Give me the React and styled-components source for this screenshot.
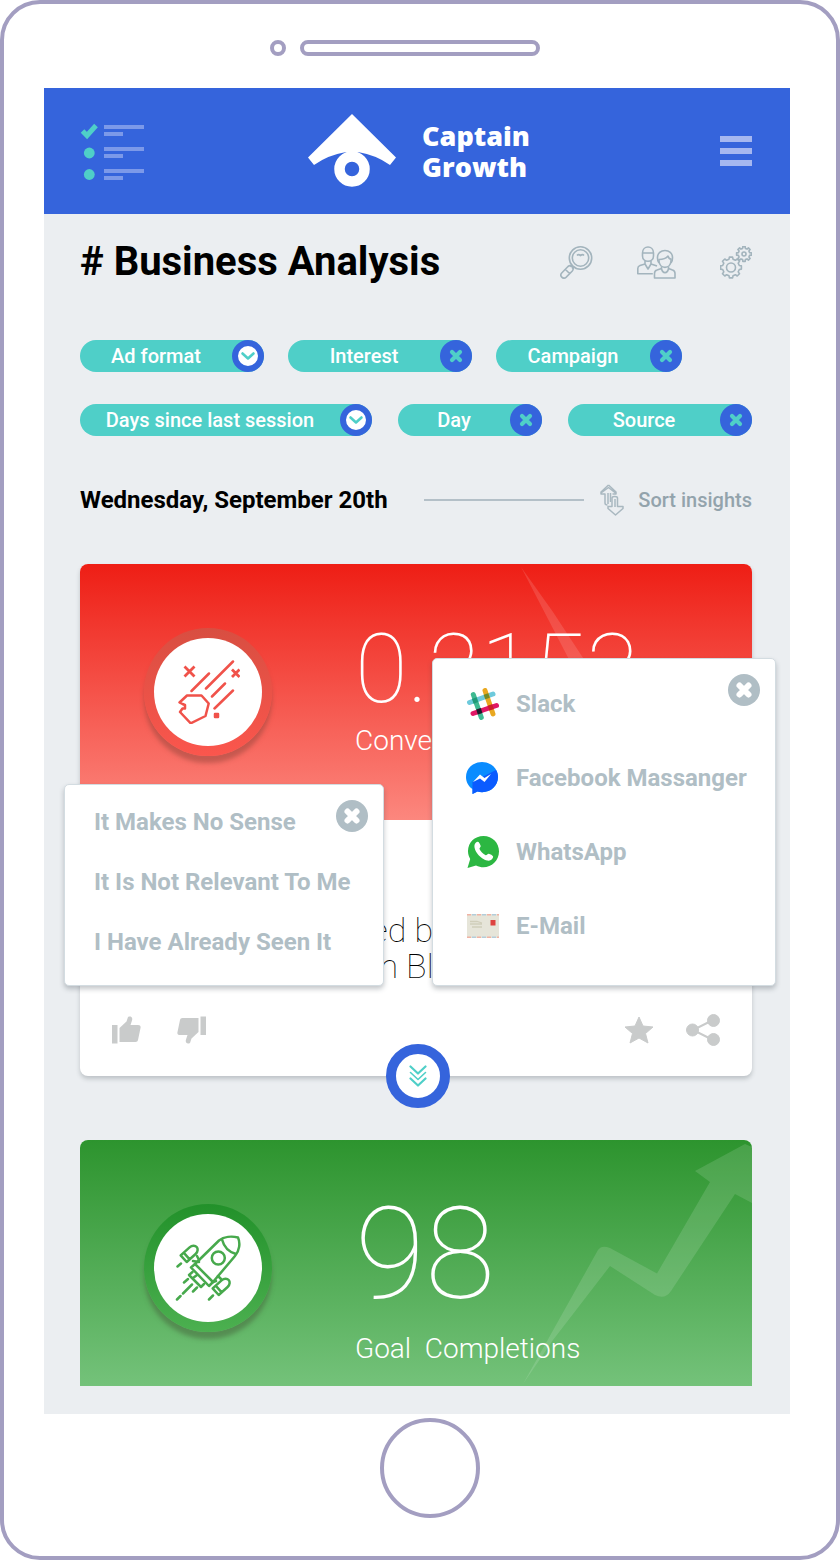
import React from "react";
import styled, { createGlobalStyle } from "styled-components";

const color = {
  frame: "#a39ec1",
  blue: "#3564dc",
  teal: "#4fcfc8",
  page: "#ebeef1",
  muted: "#b0bec5",
  line: "#a3b4bd",
  action: "#c9cbcb",
};

const GlobalStyle = createGlobalStyle`
  *, *::before, *::after { box-sizing: border-box; }
  body { margin: 0; background: #fff; font-family: Roboto, "Liberation Sans", sans-serif; }
  h1, h2, p, ul { margin: 0; padding: 0; }
  button { font: inherit; color: inherit; border: 0; padding: 0; background: none; cursor: pointer; }
  svg { display: block; }
`;

const Phone = styled.div`
  display: flex;
  flex-direction: column;
  align-items: center;
  border: 4px solid ${color.frame};
  border-radius: 40px;
  padding: 36px 46px 38px 40px;
  background: #fff;
`;

const Speaker = styled.div`
  display: flex;
  gap: 14px;
  margin: 0 24px 32px 0;
`;

const SpeakerPart = styled.span`
  width: ${(p) => p.$width}px;
  height: 16px;
  border: 4px solid ${color.frame};
  border-radius: 8px;
`;

const HomeButton = styled.button`
  width: 100px;
  height: 100px;
  margin: 4px 0 0 26px;
  border: 4px solid ${color.frame};
  border-radius: 50%;
`;

const Screen = styled.div`
  width: 100%;
  background: ${color.page};
`;

const Header = styled.header`
  display: grid;
  grid-template-columns: 64px 1fr 64px;
  align-items: center;
  height: 126px;
  padding: 0 38px 0 36px;
  background: ${color.blue};
`;

const MenuButton = styled.button`
  justify-self: end;
`;

const Brand = styled.a`
  display: flex;
  align-items: center;
  justify-content: center;
  gap: 26px;
  padding-left: 6px;
  color: #fff;
  text-decoration: none;
  font: 800 27px/31px "Open Sans", "Noto Sans", sans-serif;
`;

const Content = styled.main`
  padding: 24px 38px 28px 36px;
`;

const TitleRow = styled.div`
  display: flex;
  align-items: center;
  justify-content: space-between;
  height: 48px;
`;

const Title = styled.h1`
  font-size: 40px;
  line-height: 44px;
  font-weight: 700;
  color: #000;
`;

const Tools = styled.div`
  display: flex;
  gap: 44px;
  color: ${color.line};
`;

const Filters = styled.div`
  display: flex;
  flex-direction: column;
  gap: 32px;
  margin: 54px 0 48px;
`;

const FilterRow = styled.div`
  display: flex;
  gap: ${(p) => p.$gap}px;
`;

const Chip = styled.div`
  display: flex;
  width: ${(p) => p.$width}px;
  height: 32px;
  border-radius: 16px;
  background: ${color.teal};
`;

const ChipLabel = styled.span`
  flex: 1;
  text-align: center;
  white-space: nowrap;
  color: #fff;
  font-size: 20px;
  line-height: 32px;
  font-weight: 500;
`;

const ChipButton = styled.button`
  display: grid;
  place-items: center;
  width: 32px;
  height: 32px;
  border-radius: 50%;
  background: ${(p) => (p.$open ? "#fff" : color.blue)};
  border: ${(p) => (p.$open ? 6 : 0)}px solid ${color.blue};
`;

const DateRow = styled.div`
  display: flex;
  align-items: center;
  height: 32px;
  margin-bottom: 48px;
`;

const DateTitle = styled.h2`
  font-size: 24px;
  line-height: 32px;
  font-weight: 700;
  color: #000;
`;

const Rule = styled.span`
  flex: 1;
  height: 2px;
  margin: 0 16px 0 36px;
  background: #b4c0c8;
`;

const SortButton = styled.button`
  display: flex;
  align-items: center;
  gap: 14px;
  color: #93a3ac;
  font-size: 20px;
  line-height: 32px;
  font-weight: 500;
`;

const Card = styled.article`
  position: relative;
  background: #fff;
  border-radius: ${(p) => (p.$cut ? "8px 8px 0 0" : "8px")};
  box-shadow: ${(p) => (p.$cut ? "none" : "0 3px 4px rgba(60, 70, 80, 0.25)")};
  margin-top: ${(p) => (p.$cut ? 64 : 0)}px;
`;

const Banner = styled.div`
  position: relative;
  display: flex;
  height: ${(p) => p.$height}px;
  padding: 64px;
  gap: 83px;
  border-radius: 8px 8px 0 0;
  background: linear-gradient(${(p) => p.$from}, ${(p) => p.$to});
  color: #fff;
`;

const Trend = styled.svg`
  position: absolute;
  top: 0;
  right: 0;
`;

const Badge = styled.div`
  display: grid;
  place-items: center;
  flex: none;
  width: 128px;
  height: 128px;
  border-radius: 50%;
  background: linear-gradient(${(p) => p.$from}, ${(p) => p.$to});
  box-shadow: 0 7px 4px ${(p) => p.$shade};
`;

const BadgeFace = styled.div`
  display: grid;
  place-items: center;
  width: 108px;
  height: 108px;
  border-radius: 50%;
  background: #fff;
`;

const Metric = styled.div`
  position: relative;
  white-space: pre;
`;

const MetricValue = styled.p`
  font-size: ${(p) => p.$size}px;
  line-height: ${(p) => p.$line}px;
  font-weight: 100;
`;

const MetricLabel = styled.p`
  font-size: 28px;
  line-height: 32px;
  font-weight: 300;
  margin-top: ${(p) => p.$gap}px;
`;

const Insight = styled.p`
  padding: 92px 30px 0;
  font-size: 34px;
  line-height: 36px;
  font-weight: 100;
  color: #000;
  white-space: pre;
`;

const Actions = styled.div`
  display: flex;
  justify-content: space-between;
  align-items: center;
  height: 92px;
  padding: 0 32px;
  color: ${color.action};
`;

const ActionGroup = styled.div`
  display: flex;
  align-items: center;
  gap: ${(p) => p.$gap}px;
`;

const ExpandButton = styled.button`
  position: absolute;
  left: 50%;
  bottom: -32px;
  display: grid;
  place-items: center;
  width: 64px;
  height: 64px;
  margin-left: -30px;
  border: 10px solid ${color.blue};
  border-radius: 50%;
  background: #fff;
`;

const Popup = styled.div`
  position: absolute;
  border: 1px solid #d3dce1;
  border-radius: 5px;
  background: #fff;
  box-shadow: 0 3px 5px rgba(60, 70, 80, 0.3);
`;

const ReasonPopup = styled(Popup)`
  left: -16px;
  top: 220px;
  width: 320px;
  height: 202px;
  padding: 7px 29px;
`;

const SharePopup = styled(Popup)`
  right: -24px;
  top: 94px;
  width: 344px;
  height: 328px;
  padding: 8px 33px;
`;

const PopupList = styled.ul`
  list-style: none;
`;

const PopupItem = styled.button`
  display: flex;
  align-items: center;
  gap: 16px;
  height: ${(p) => p.$height}px;
  color: ${color.muted};
  font-size: 24px;
  font-weight: 700;
  white-space: nowrap;
`;

const CloseButton = styled.button`
  position: absolute;
  top: 15px;
  right: 15px;
`;

const Close = () => (
  <svg width="32" height="32" viewBox="0 0 32 32">
    <circle cx="16" cy="16" r="16" fill={color.muted} />
    <path d="M11.5 11.5l9 9M20.5 11.5l-9 9" stroke="#fff" strokeWidth="6" strokeLinecap="round" />
  </svg>
);

const ListIcon = () => (
  <svg width="64" height="58" viewBox="0 0 64 58">
    <path d="M2.5 9L7 13.5L16 3.5" fill="none" stroke={color.teal} strokeWidth="5" />
    <circle cx="9.3" cy="31" r="5.4" fill={color.teal} />
    <circle cx="9.3" cy="52.5" r="5.4" fill={color.teal} />
    <path d="M24 5h40M24 27h40M24 49h40" stroke="#7c99e9" strokeWidth="4" />
    <path d="M24 12h19M24 34h19M24 56h19" stroke="#7c99e9" strokeWidth="4" />
  </svg>
);

const Logo = () => (
  <svg width="88" height="74" viewBox="0 0 88 74">
    <path d="M44 0L88 43.5L82 51Q68 41 50 38L44 40L38 38Q20 41 6 51L0 43.5Z" fill="#fff" />
    <circle cx="44" cy="55" r="12.5" fill={color.blue} stroke="#fff" strokeWidth="10.5" />
  </svg>
);

const Burger = () => (
  <svg width="32" height="30" viewBox="0 0 32 30">
    <path d="M0 3h32M0 15h32M0 27h32" stroke="#a5b7f0" strokeWidth="6" />
  </svg>
);

const SearchIcon = () => (
  <svg width="33" height="33" viewBox="0 0 33 33" fill="none" stroke="currentColor" strokeWidth="1.6">
    <circle cx="20.5" cy="12" r="11.2" />
    <circle cx="20.5" cy="12" r="8.2" />
    <path d="M17 9.5c1-1.2 2.2-1 3.5 0c1.3-1 2.5-1.2 3.5 0" />
    <path d="M12.5 19l-2 2M14 20.5l-2 2" />
    <path d="M8 20.500L1.700 27c-2.500 2.800 1.300 6.800 4.300 4.300l6.300-6.300c2.500-3-1.300-6.800-4.300-4.500zM5.500 23.500l4.300 4.300" />
  </svg>
);

const PeopleIcon = () => (
  <svg width="39" height="33" viewBox="0 0 39 33" fill="none" stroke="currentColor" strokeWidth="1.6" strokeLinejoin="round">
    <path d="M5.5 7c0-8 11-8 11 0v3c0 7-11 7-11 0zM5.5 7h11" />
    <path d="M8 15v3l-5 1.5c-1.500.5-2.200 1.500-2.200 3v5.300h15M14 15v3l6 2M8 18l3 5l3-5M11 23v-2" />
    <path d="M20.500 12c-.5-10 15.500-10 15 0c0 3-1 4-1.500 5M20.500 12c0 3 1 4 1.500 5" />
    <path d="M22 13.500c4 0 7-1 9-3.500c.5 2 1.500 3 3 3v2c-.5 8.500-11.500 8.500-12 0z" />
    <path d="M24.500 20.500v2l-4.500 1.500c-2 .5-2.500 2-2.500 3.500v4.500h20.500v-4.500c0-1.500-.5-3-2.500-3.500l-4-1.500v-2M24.500 22.500c1 5.500 6 5.500 7 0" />
  </svg>
);

const gearPath = (cx, cy, outer, inner, teeth) => {
  const points = [];
  const step = (Math.PI * 2) / teeth;
  for (let i = 0; i < teeth; i += 1) {
    [[-0.3, inner], [-0.2, outer], [0.2, outer], [0.3, inner]].forEach(([offset, r]) => {
      const angle = (i + offset) * step;
      points.push(`${(cx + Math.cos(angle) * r).toFixed(1)} ${(cy + Math.sin(angle) * r).toFixed(1)}`);
    });
  }
  return `M${points.join("L")}Z`;
};

const GearsIcon = () => (
  <svg width="32" height="33" viewBox="0 0 32 33" fill="none" stroke="currentColor" strokeWidth="1.6" strokeLinejoin="round">
    <path d={gearPath(11, 21.5, 10.5, 8.5, 8)} />
    <circle cx="11" cy="21.5" r="4.5" />
    <path d={gearPath(24, 8, 7.500, 5.8, 8)} />
    <circle cx="24" cy="8" r="2" />
  </svg>
);

const SortIcon = () => (
  <svg width="24" height="32" viewBox="0 0 24 32" fill="none" stroke="#a9b8c0" strokeWidth="1.5" strokeLinejoin="round">
    <path d="M8.5 1L1 8v2h4v9c0 1 1 2 2.500 2M8.5 1L16 8v2h-3.500M1 9l7.500-5.500L15.500 9M8 9v11M10.500 9v9" />
    <path d="M15.5 31L8 24.5v-2h4V14c0-2 5.500-2 5.500 0v8.5H23v2zM15 15v8" />
  </svg>
);

const Chevron = () => (
  <svg width="20" height="20" viewBox="0 0 20 20">
    <path d="M4.5 7.5L10 12.5L15.5 7.5" fill="none" stroke={color.teal} strokeWidth="2.6" strokeLinecap="round" strokeLinejoin="round" />
  </svg>
);

const Cross = () => (
  <svg width="14" height="14" viewBox="0 0 14 14">
    <path d="M3 3l8 8M11 3l-8 8" stroke={color.teal} strokeWidth="4.2" strokeLinecap="round" />
  </svg>
);

const MeteorIcon = () => (
  <svg width="64" height="64" viewBox="0 0 64 64" fill="none" stroke="#f0524a" strokeWidth="2.5" strokeLinejoin="round" strokeLinecap="round">
    <path d="M11 35.5h14.5l7.200 8L29.5 56l-14.800 7.300L4 52l2.500-3.500H9V45L6.5 44L3.5 42.500z" />
    <path d="M15.5 31L33 13.5M30 28.5L57 1.500M36 36.5L49 23.5M38.5 48.5L57 30.5" />
    <path d="M8.5 6.5l10 10M18.5 6.5l-10 10M56 9.5l7.5 7.5M63.5 9.5l-7.500 7.500" strokeLinecap="butt" strokeWidth="2.8" />
    <path d="M39 54h3v3h-3z" fill="#f0524a" />
  </svg>
);

const Booster = ({ x, y }) => (
  <g transform={`translate(${x} ${y}) rotate(-42)`}>
    <path d="M-8.5 -4.5H3.5C7 -4.5 9 -2 9 0S7 4.5 3.5 4.5H-8.5ZM-4.5 -4.5V4.5" />
  </g>
);

const RocketIcon = () => (
  <svg width="66" height="66" viewBox="-1 -1 66 66" fill="none" stroke="#47a94c" strokeWidth="2.5" strokeLinejoin="round" strokeLinecap="round">
    <path d="M19 28L43 4.5C48 .5 56 0 62 1.500C64.5 7 63.5 15 59 20L37 46Z" />
    <path d="M46 3.5Q49 15 60 18" />
    <circle cx="42.3" cy="22" r="6.5" />
    <path d="M19 28L15 31.5L33 50L37 46" />
    <path d="M16.5 36L13 39L25 51L28 48M17 42l4-3" />
    <Booster x={14} y={17} />
    <Booster x={46} y={50} />
    <path d="M17 25l6 1M21 20l2 4M37 46l3-1M42 40l3 3" />
    <path d="M1.5 30.5L5 27.5M8 46.5L12 43M17 55.5L21 51.5M1 63.5L4.5 60M7 57.5L16 48.5M33 63.5L37 59.5" />
  </svg>
);

const DoubleChevron = () => (
  <svg width="18" height="24" viewBox="0 0 18 24" fill="none" stroke={color.teal} strokeLinecap="round" strokeLinejoin="round">
    <path d="M1.5 2.5L9 9.5L16.5 2.5M1.5 14.5L9 21.5L16.5 14.5" strokeWidth="2.2" />
    <path d="M1.5 8.5L9 15.5L16.5 8.5" strokeWidth="1.6" />
  </svg>
);

const ThumbIcon = ({ down }) => (
  <svg width="29" height="28" viewBox="0 0 29 28" fill="currentColor">
    <g transform={down ? "rotate(180 14.5 14)" : undefined}>
      <path d="M0 9h5.500v18.500H0zM7.500 12L14.500 5.500L16 1c3-1.500 5 .5 4 3.500L18.500 9H26c2 0 3 1 2.500 3L26 24c-.3 1.300-1 2-2.500 2H7.500z" />
    </g>
  </svg>
);

const StarIcon = () => (
  <svg width="30" height="28" viewBox="0 0 30 28" fill="currentColor" stroke="currentColor" strokeLinejoin="round">
    <path d="M15 1l4 9l10 1l-7.500 6.500L24 27l-9-5l-9 5l2.500-9.500L1 11l10-1z" />
  </svg>
);

const ShareIcon = () => (
  <svg width="34" height="32" viewBox="0 0 34 32" fill="currentColor" stroke="currentColor">
    <path d="M27 6L7 16l20 10" fill="none" strokeWidth="2" />
    <circle cx="27.5" cy="6.5" r="6" />
    <circle cx="6.5" cy="16" r="6" />
    <circle cx="27.5" cy="25.5" r="6" />
  </svg>
);

const SlackIcon = () => (
  <svg width="34" height="32" viewBox="-1 0 34 32" strokeWidth="5" strokeLinecap="round">
    <path d="M2.5 14.5L26 6" stroke="#6ecadc" />
    <path d="M18 2.5L26 26" stroke="#e9a820" />
    <path d="M6.3 6.5L14.3 29.5" stroke="#3eb991" />
    <path d="M6 25.5L29.5 17.5" stroke="#e01765" />
    <g strokeLinecap="butt">
      <path d="M17.5 9L22 7.5" stroke="#6f8a2a" />
      <path d="M5.8 13.3L10.3 11.7" stroke="#1f9a78" />
      <path d="M10 24L14.6 22.5" stroke="#1d1d2b" />
      <path d="M21.5 20.2L26 18.7" stroke="#cc2027" />
    </g>
  </svg>
);

const MessengerIcon = () => (
  <svg width="34" height="32" viewBox="0 0 34 32">
    <path d="M16 0C7 0 0 6.500 0 15c0 5 2.300 9.300 6.500 12V32l5-2.400c11 2.700 20.500-4.600 20.500-14.600C32 6.500 25 0 16 0z" fill="#0a8cff" />
    <path d="M30 8L6.500 20v12l5-2.400C22.500 32.300 32 25 32 15c0-2.500-.7-5-2-7z" fill="#0b5bff" />
    <path d="M7 20L14 12.500L18.500 16L25 12L18.500 20L14 16.500Z" fill="#fff" />
  </svg>
);

const WhatsAppIcon = () => (
  <svg width="34" height="34" viewBox="-1 0 34 34">
    <path d="M16.5 1C7.500 1 1 7.500 1 16c0 3 .8 5.500 2.200 8L.5 33l8.500-2.500C20 36 32 28 32 16.500C32 8 25.500 1 16.500 1z" fill="#2cb742" />
    <path d="M7.500 10c.5-2 2-3.500 3.500-3.300c1 .1 2.500 3.300 2.700 4.300c.2 1.200-1.500 2-1.200 3c1 2.500 3.500 5 6.200 6.200c1 .3 2-1.700 3.200-1.500c1.200.2 4 1.800 4.200 2.800c.3 1.500-2 4.300-4.500 4.200C15 25.500 6.500 16.500 7.500 10z" fill="#fff" />
  </svg>
);

const MailIcon = () => (
  <svg width="34" height="24" viewBox="-1 0 34 24">
    <rect width="32" height="24" fill="#e6e5d9" />
    <path d="M0 .7h32M0 23.3h32" stroke="#f0b3a4" strokeWidth="1.4" strokeDasharray="4 6" />
    <path d="M5 .7h27M5 23.3h27" stroke="#b4cddA" strokeWidth="1.4" strokeDasharray="4 6" />
    <path d="M3 7.500h7l5 1.500M3 10h12M5 13h10" stroke="#d0ceba" strokeWidth="1.3" fill="none" />
    <rect x="23.5" y="6" width="5" height="5.5" fill="#dd4340" />
  </svg>
);

const trendPaths = {
  up: "M443 244L518 110Q521.5 104.5 530 108L577 133.5L630 42L615 31L665 4L672 7V63L655 54L591 151Q585 160 575 155L530 126L473 200Z",
  down: "M441 3L508 132Q514 142 524 138L577 112L630 204L615 215L665 242L672 239V183L655 192L596 106Q588 98 578 102L524 126L473 48Z",
};

const TrendArrow = ({ direction }) => (
  <Trend width="232" height="246" viewBox="440 0 232 246" aria-hidden="true">
    <path d={trendPaths[direction]} fill="#fff" fillOpacity="0.13" />
  </Trend>
);

const filterRows = [
  {
    gap: 24,
    chips: [
      { label: "Ad format", width: 184, open: true },
      { label: "Interest", width: 184 },
      { label: "Campaign", width: 186 },
    ],
  },
  {
    gap: 26,
    chips: [
      { label: "Days since last session", width: 292, open: true },
      { label: "Day", width: 144 },
      { label: "Source", width: 184 },
    ],
  },
];

const reasons = ["It Makes No Sense", "It Is Not Relevant To Me", "I Have Already Seen It"];

const shareTargets = [
  { label: "Slack", Icon: SlackIcon },
  { label: "Facebook Massanger", Icon: MessengerIcon },
  { label: "WhatsApp", Icon: WhatsAppIcon },
  { label: "E-Mail", Icon: MailIcon },
];

export default function App() {
  return (
    <>
      <GlobalStyle />
      <Phone>
        <Speaker>
          <SpeakerPart $width={16} />
          <SpeakerPart $width={240} />
        </Speaker>
        <Screen>
          <Header>
            <button aria-label="Tasks"><ListIcon /></button>
            <Brand href="#home">
              <Logo />
              <span>Captain<br />Growth</span>
            </Brand>
            <MenuButton aria-label="Menu"><Burger /></MenuButton>
          </Header>
          <Content>
            <TitleRow>
              <Title># Business Analysis</Title>
              <Tools>
                <button aria-label="Search"><SearchIcon /></button>
                <button aria-label="Team"><PeopleIcon /></button>
                <button aria-label="Settings"><GearsIcon /></button>
              </Tools>
            </TitleRow>
            <Filters>
              {filterRows.map((row) => (
                <FilterRow key={row.gap} $gap={row.gap}>
                  {row.chips.map((chip) => (
                    <Chip key={chip.label} $width={chip.width}>
                      <ChipLabel>{chip.label}</ChipLabel>
                      <ChipButton $open={chip.open} aria-label={`${chip.open ? "Open" : "Remove"} ${chip.label}`}>
                        {chip.open ? <Chevron /> : <Cross />}
                      </ChipButton>
                    </Chip>
                  ))}
                </FilterRow>
              ))}
            </Filters>
            <DateRow>
              <DateTitle>Wednesday, September 20th</DateTitle>
              <Rule />
              <SortButton><SortIcon />Sort insights</SortButton>
            </DateRow>
            <Card>
              <Banner $height={256} $from="#ee1e15" $to="#fc877e">
                <TrendArrow direction="down" />
                <Badge $from="#d84e41" $to="#fb564d" $shade="rgba(150, 70, 60, 0.5)">
                  <BadgeFace><MeteorIcon /></BadgeFace>
                </Badge>
                <Metric>
                  <MetricValue $size={96} $line={82}>0.2153</MetricValue>
                  <MetricLabel $gap={15}>Conversions</MetricLabel>
                </Metric>
              </Banner>
              <Insight>{"Change was caused by\nsignificant traffic on Black"}</Insight>
              <Actions>
                <ActionGroup $gap={36}>
                  <button aria-label="Like"><ThumbIcon /></button>
                  <button aria-label="Dislike"><ThumbIcon down /></button>
                </ActionGroup>
                <ActionGroup $gap={32}>
                  <button aria-label="Favourite"><StarIcon /></button>
                  <button aria-label="Share"><ShareIcon /></button>
                </ActionGroup>
              </Actions>
              <ReasonPopup>
                <PopupList>
                  {reasons.map((reason) => (
                    <li key={reason}><PopupItem $height={60}>{reason}</PopupItem></li>
                  ))}
                </PopupList>
                <CloseButton aria-label="Close reasons"><Close /></CloseButton>
              </ReasonPopup>
              <SharePopup>
                <PopupList>
                  {shareTargets.map(({ label, Icon }) => (
                    <li key={label}><PopupItem $height={74}><Icon />{label}</PopupItem></li>
                  ))}
                </PopupList>
                <CloseButton aria-label="Close sharing"><Close /></CloseButton>
              </SharePopup>
              <ExpandButton aria-label="Expand"><DoubleChevron /></ExpandButton>
            </Card>
            <Card $cut>
              <Banner $height={246} $from="#2d942e" $to="#74c27a">
                <TrendArrow direction="up" />
                <Badge $from="#22912a" $to="#4cb050" $shade="rgba(70, 100, 60, 0.5)">
                  <BadgeFace><RocketIcon /></BadgeFace>
                </Badge>
                <Metric>
                  <MetricValue $size={128} $line={100}>98</MetricValue>
                  <MetricLabel $gap={29}>{"Goal  Completions"}</MetricLabel>
                </Metric>
              </Banner>
            </Card>
          </Content>
        </Screen>
        <HomeButton aria-label="Home" />
      </Phone>
    </>
  );
}
